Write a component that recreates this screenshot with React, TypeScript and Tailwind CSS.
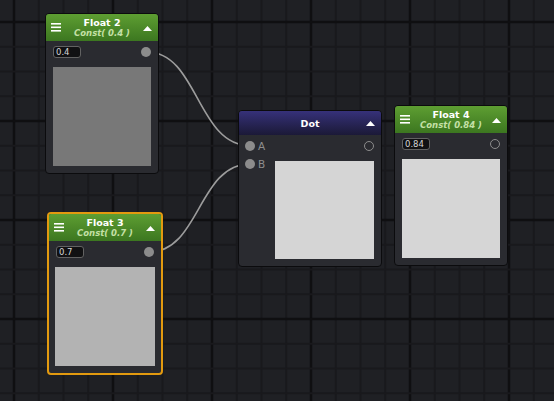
import React from "react";

function Grid() {
  const lines: React.ReactNode[] = [];
  for (let k = 0; k < 26; k++) {
    const x = 14 + (k - 1) * 24.75;
    const major = (k - 1) % 4 === 0;
    lines.push(
      <line key={"v" + k} x1={x} y1={0} x2={x} y2={401} stroke={major ? "#0f0f11" : "#19191c"} strokeWidth={major ? 2.5 : 2} />
    );
  }
  for (let k = 0; k < 20; k++) {
    const y = 22 + (k - 1) * 24.75;
    const major = (k - 1) % 4 === 0;
    lines.push(
      <line key={"h" + k} x1={0} y1={y} x2={554} y2={y} stroke={major ? "#0f0f11" : "#19191c"} strokeWidth={major ? 2.5 : 2} />
    );
  }
  return (
    <svg className="absolute inset-0" width={554} height={401}>
      <rect width={554} height={401} fill="#1f2024" />
      {lines.filter((_, i) => true)}
    </svg>
  );
}

function Hamburger() {
  return (
    <svg width="10" height="9" viewBox="0 0 10 9" className="absolute left-[5px] top-[9px]">
      <rect x="0" y="0" width="10" height="1.6" fill="#ffffff" />
      <rect x="0" y="3.5" width="10" height="1.6" fill="#ffffff" />
      <rect x="0" y="7" width="10" height="1.6" fill="#ffffff" />
    </svg>
  );
}

function Tri({ cls }: { cls: string }) {
  return (
    <svg width="9" height="5" viewBox="0 0 9 5" className={cls}>
      <polygon points="0,5 4.5,0 9,5" fill="#ffffff" />
    </svg>
  );
}

function FilledPort() {
  return <div className="w-[10px] h-[10px] rounded-full bg-[#8c8c8c]" />;
}

function RingPort() {
  return <div className="w-[10px] h-[10px] rounded-full border-[1.5px] border-[#8c8c8c]" />;
}

function FloatHeader({ title, sub }: { title: string; sub: string }) {
  return (
    <div className="relative h-[27px] shrink-0 bg-linear-to-b from-[#5e9e32] to-[#3c7720] flex flex-col items-center justify-center">
      <Hamburger />
      <div className="text-[9.5px] leading-[11px] font-bold text-white">{title}</div>
      <div className="text-[8.5px] leading-[10px] font-bold italic text-[#c4e0a6]">{sub}</div>
      <Tri cls="absolute right-[6px] top-[12px]" />
    </div>
  );
}

function ValueBox({ v }: { v: string }) {
  return (
    <div className="w-[28px] h-[12px] rounded-[3px] border border-[#626262] bg-[#111113] text-[8.5px] leading-[10px] text-[#d6d6d6] pl-[2px]">
      {v}
    </div>
  );
}

export default function App() {
  return (
    <div className="relative w-[554px] h-[401px] overflow-hidden font-['DejaVu_Sans',sans-serif]">
      <Grid />
      <svg className="absolute inset-0" width={554} height={401} fill="none">
        <path d="M147 52 C 198 52, 197 145.7, 250 145.7" stroke="#9c9c9c" strokeWidth="1.6" />
        <path d="M149 252 C 200 252, 198 164, 250 164" stroke="#9c9c9c" strokeWidth="1.6" />
      </svg>

      {/* Float 2 */}
      <div className="absolute left-[45px] top-[13px] w-[114px] h-[161px] rounded-[4px] border border-[#0b0b0d] bg-[#2a2b30] flex flex-col overflow-hidden">
        <FloatHeader title="Float 2" sub="Const( 0.4 )" />
        <div className="mt-[5px] px-[7px] flex items-center justify-between">
          <ValueBox v="0.4" />
          <FilledPort />
        </div>
        <div className="mt-[9px] ml-[7px] w-[98px] h-[99px] bg-[#787878]" />
      </div>

      {/* Float 3 (selected) */}
      <div className="absolute left-[47px] top-[212px] w-[116px] h-[163px] rounded-[4px] border-2 border-[#e39a0f] bg-[#2a2b30] flex flex-col overflow-hidden">
        <FloatHeader title="Float 3" sub="Const( 0.7 )" />
        <div className="mt-[5px] pl-[7px] pr-[7px] flex items-center justify-between">
          <ValueBox v="0.7" />
          <FilledPort />
        </div>
        <div className="mt-[9px] ml-[6px] w-[100px] h-[99px] bg-[#b3b3b3]" />
      </div>

      {/* Dot */}
      <div className="absolute left-[238px] top-[110px] w-[144px] h-[157px] rounded-[4px] border border-[#0b0b0d] bg-[#2a2b30] flex flex-col overflow-hidden">
        <div className="relative h-[24px] shrink-0 bg-linear-to-b from-[#36317a] to-[#1b1937] flex items-center justify-center">
          <div className="text-[9.5px] leading-[11px] font-bold text-white">Dot</div>
          <Tri cls="absolute right-[6px] top-[10px]" />
        </div>
        <div className="flex justify-between">
          <div className="flex flex-col mt-[2px] pl-[6px]">
            <div className="h-[18px] flex items-center gap-[3px]">
              <FilledPort />
              <span className="text-[10.5px] leading-none text-[#8e8e8e]">A</span>
            </div>
            <div className="h-[18px] flex items-center gap-[3px]">
              <FilledPort />
              <span className="text-[10.5px] leading-none text-[#8e8e8e]">B</span>
            </div>
          </div>
          <div className="flex flex-col items-end mt-[2px] pr-[7px]">
            <div className="h-[18px] flex items-center">
              <RingPort />
            </div>
            <div className="mt-[6px] w-[99px] h-[98px] bg-[#d5d5d5]" />
          </div>
        </div>
      </div>

      {/* Float 4 */}
      <div className="absolute left-[394px] top-[105px] w-[114px] h-[161px] rounded-[4px] border border-[#0b0b0d] bg-[#2a2b30] flex flex-col overflow-hidden">
        <FloatHeader title="Float 4" sub="Const( 0.84 )" />
        <div className="mt-[5px] px-[7px] flex items-center justify-between">
          <ValueBox v="0.84" />
          <RingPort />
        </div>
        <div className="mt-[9px] ml-[7px] w-[98px] h-[99px] bg-[#d6d6d6]" />
      </div>
    </div>
  );
}
